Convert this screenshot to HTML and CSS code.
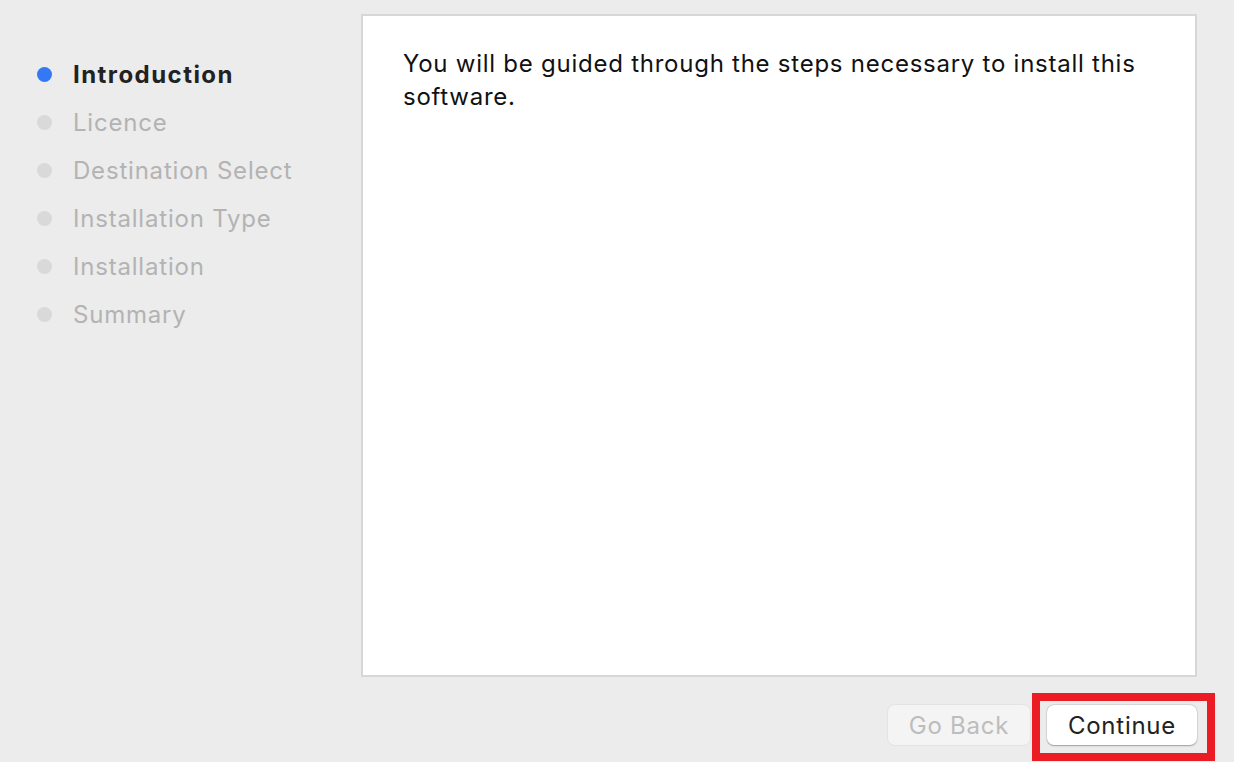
FILE: index.html
```html
<!DOCTYPE html>
<html lang="en">
<head>
  <meta charset="UTF-8" />
  <title>Install</title>
  <link rel="stylesheet" href="styles.css">
</head>
<body>
  <div class="window">
    <div class="main">
      <ul class="steps">
        <li class="step active"><span class="dot"></span>Introduction</li>
        <li class="step"><span class="dot"></span>Licence</li>
        <li class="step"><span class="dot"></span>Destination Select</li>
        <li class="step"><span class="dot"></span>Installation Type</li>
        <li class="step"><span class="dot"></span>Installation</li>
        <li class="step"><span class="dot"></span>Summary</li>
      </ul>
      <div class="panel">
        <p>You will be guided through the steps necessary to install this software.</p>
      </div>
    </div>
    <div class="buttons">
      <button class="btn disabled">Go Back</button>
      <div class="highlight">
        <button class="btn primary">Continue</button>
      </div>
    </div>
  </div>
</body>
</html>
```

FILE: styles.css
```css
* {
  box-sizing: border-box;
}
body {
  margin: 0;
  background: #ececec;
  font-family: Inter, "Liberation Sans", sans-serif;
  height: 762px;
  overflow: hidden;
}
.window {
  display: flex;
  flex-direction: column;
  padding: 14px 37px 0 0;
}
.main {
  display: flex;
}
.steps {
  list-style: none;
  margin: 0;
  padding: 36px 0 0 37px;
  width: 361px;
}
.step {
  display: flex;
  align-items: center;
  height: 48px;
  font-size: 24px;
  letter-spacing: 0.8px;
  color: #b3b3b3;
}
.step .dot {
  width: 15px;
  height: 15px;
  border-radius: 50%;
  background: #d9d9d9;
  margin-right: 21px;
}
.step.active {
  color: #222;
  font-weight: 700;
  letter-spacing: 1.45px;
}
.step.active .dot {
  background: #3478f6;
}
.panel {
  flex: 1;
  height: 663px;
  background: #fff;
  border: 2px solid #d7d7d7;
  padding: 31px 40px;
}
.panel p {
  margin: 0;
  font-size: 24px;
  line-height: 33px;
  letter-spacing: 0.75px;
  color: #111;
}
.buttons {
  display: flex;
  justify-content: flex-end;
  align-items: center;
  gap: 17px;
  margin-top: 28px;
}
.btn {
  font-family: inherit;
  font-size: 24px;
  letter-spacing: 0.75px;
  height: 40px;
  border-radius: 7px;
  border: none;
  padding: 0;
}
.btn.disabled {
  width: 142px;
  background: #f4f4f4;
  color: #bdbdbd;
  box-shadow: 0 0 0 1px #e4e4e4;
}
.btn.primary {
  width: 150px;
  background: #fff;
  color: #222;
  box-shadow: 0 0.5px 1.5px rgba(0, 0, 0, 0.3), 0 0 0 0.5px rgba(0, 0, 0, 0.08);
}
.highlight {
  position: relative;
}
.highlight::after {
  content: "";
  position: absolute;
  left: -15px;
  top: -12px;
  right: -18px;
  bottom: -16px;
  border: 8px solid #ec1c24;
}
```
